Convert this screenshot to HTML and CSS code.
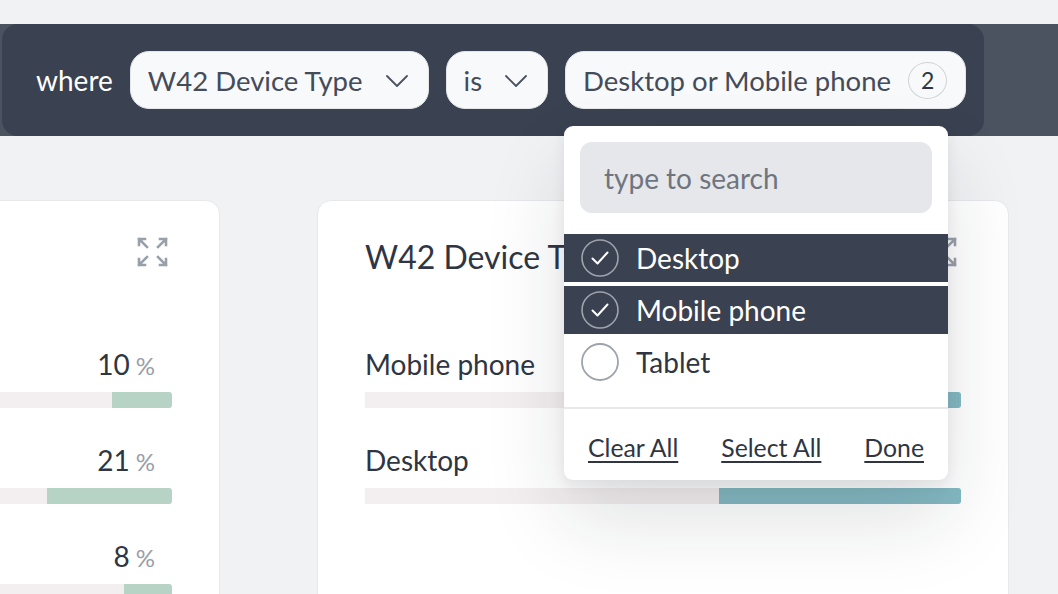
FILE: index.html
```html
<!DOCTYPE html>
<html>
<head>
<meta charset="utf-8">
<link rel="stylesheet" href="styles.css">
</head>
<body>
<div class="page">
  <div class="band">
    <div class="filter-bar">
      <span class="where">where</span>
      <div class="pill">
        <span>W42 Device Type</span>
        <svg class="chev" width="22" height="12" viewBox="0 0 22 12"><polyline points="1,1 11,11 21,1" fill="none" stroke="#4a5160" stroke-width="1.8" stroke-linecap="round" stroke-linejoin="round"/></svg>
      </div>
      <div class="pill">
        <span>is</span>
        <svg class="chev" width="22" height="12" viewBox="0 0 22 12"><polyline points="1,1 11,11 21,1" fill="none" stroke="#4a5160" stroke-width="1.8" stroke-linecap="round" stroke-linejoin="round"/></svg>
      </div>
      <div class="pill pill-value">
        <span>Desktop or Mobile phone</span>
        <span class="count">2</span>
      </div>
    </div>
  </div>

  <div class="cards">
    <div class="card">
      <div class="card-head">
        <span class="title">W42 Browser</span>
        <svg class="expand" width="31" height="30" viewBox="0 0 31 30"><g fill="none" stroke="#9aa0a9" stroke-width="2.6" stroke-linecap="square"><path d="M2 8V2h6M2 2l8 8"/><path d="M23 2h6v6M29 2l-8 8"/><path d="M2 22v6h6M2 28l8-8"/><path d="M29 22v6h-6M29 28l-8-8"/></g></svg>
      </div>
      <div class="rows">
        <div class="row">
          <div class="row-head"><span class="label">Chrome</span><span class="value">10<small>%</small></span></div>
          <div class="bar"><div class="fill green" style="width:10%"></div></div>
        </div>
        <div class="row">
          <div class="row-head"><span class="label">Safari</span><span class="value">21<small>%</small></span></div>
          <div class="bar"><div class="fill green" style="width:21%"></div></div>
        </div>
        <div class="row">
          <div class="row-head"><span class="label">Firefox</span><span class="value">8<small>%</small></span></div>
          <div class="bar"><div class="fill green" style="width:8%"></div></div>
        </div>
      </div>
    </div>

    <div class="card">
      <div class="card-head">
        <span class="title">W42 Device Type</span>
        <svg class="expand" width="31" height="30" viewBox="0 0 31 30"><g fill="none" stroke="#9aa0a9" stroke-width="2.6" stroke-linecap="square"><path d="M2 8V2h6M2 2l8 8"/><path d="M23 2h6v6M29 2l-8 8"/><path d="M2 22v6h6M2 28l8-8"/><path d="M29 22v6h-6M29 28l-8-8"/></g></svg>
      </div>
      <div class="rows">
        <div class="row">
          <div class="row-head"><span class="label">Mobile phone</span><span class="value">59<small>%</small></span></div>
          <div class="bar"><div class="fill teal" style="width:59%"></div></div>
        </div>
        <div class="row">
          <div class="row-head"><span class="label">Desktop</span><span class="value">41<small>%</small></span></div>
          <div class="bar"><div class="fill teal" style="width:40.6%"></div></div>
        </div>
      </div>
    </div>
  </div>

  <div class="dropdown">
    <div class="search">type to search</div>
    <div class="options">
      <div class="option selected">
        <span class="check"><svg width="38" height="38" viewBox="0 0 38 38"><circle cx="19" cy="19" r="18" fill="none" stroke="#9ea3ac" stroke-width="1.6"/><polyline points="11.5,19.5 16.5,24.5 26.5,13.5" fill="none" stroke="#fff" stroke-width="2" stroke-linecap="round" stroke-linejoin="round"/></svg></span>
        <span>Desktop</span>
      </div>
      <div class="option selected">
        <span class="check"><svg width="38" height="38" viewBox="0 0 38 38"><circle cx="19" cy="19" r="18" fill="none" stroke="#9ea3ac" stroke-width="1.6"/><polyline points="11.5,19.5 16.5,24.5 26.5,13.5" fill="none" stroke="#fff" stroke-width="2" stroke-linecap="round" stroke-linejoin="round"/></svg></span>
        <span>Mobile phone</span>
      </div>
      <div class="option">
        <span class="check"><svg width="38" height="38" viewBox="0 0 38 38"><circle cx="19" cy="19" r="18" fill="none" stroke="#9ea3ac" stroke-width="1.8"/></svg></span>
        <span>Tablet</span>
      </div>
    </div>
    <div class="footer">
      <a>Clear All</a>
      <a>Select All</a>
      <a>Done</a>
    </div>
  </div>
</div>
</body>
</html>
```

FILE: styles.css
```css
* { box-sizing: border-box; }
html, body {
  margin: 0;
  padding: 0;
  background: #f1f2f4;
  font-family: Lato, "Noto Sans", sans-serif;
  overflow: hidden;
}
.page {
  position: relative;
  width: 1058px;
  height: 594px;
  overflow: hidden;
  padding-top: 24px;
}
.band {
  height: 112px;
  background: #4b5260;
  display: flex;
}
.filter-bar {
  width: 982px;
  margin-left: 2px;
  height: 112px;
  background: #3a4150;
  border-radius: 16px;
  display: flex;
  align-items: center;
  padding-left: 34px;
  gap: 17px;
}
.where {
  color: #ffffff;
  font-size: 28px;
}
.pill {
  height: 58px;
  background: #f8f9fa;
  border: 1px solid #e3e5e9;
  border-radius: 19px;
  display: flex;
  align-items: center;
  padding: 0 20px 0 17px;
  gap: 23px;
  color: #444b59;
  font-size: 27.5px;
}
.chev { display: block; margin-top: 2px; }
.pill-value { gap: 17px; padding-right: 18px; }
.count {
  width: 39px;
  height: 37px;
  border: 1.5px solid #cfd2d7;
  border-radius: 50%;
  display: flex;
  align-items: center;
  justify-content: center;
  font-size: 23px;
  color: #2f3542;
}

.cards {
  display: flex;
  gap: 97px;
  margin-top: 64px;
  margin-left: -472px;
}
.card {
  width: 692px;
  height: 440px;
  flex: none;
  background: #ffffff;
  border: 1px solid #e7e8eb;
  border-radius: 14px;
  padding: 36px 47px 0;
}
.card-head {
  display: flex;
  justify-content: space-between;
  align-items: flex-start;
  height: 40px;
}
.title {
  font-size: 32px;
  line-height: 40px;
  color: #2f3542;
}
.expand { display: block; margin-right: 4px; }
.rows {
  margin-top: 70px;
  display: flex;
  flex-direction: column;
  gap: 35px;
}
.row-head {
  display: flex;
  justify-content: space-between;
  align-items: baseline;
  height: 34px;
  line-height: 34px;
  font-size: 28px;
  color: #2f3542;
  margin-bottom: 11px;
}
.value { padding-right: 17px; }
.value small {
  font-size: 24px;
  line-height: 20px;
  color: #989ea8;
  margin-left: 6px;
}
.bar {
  height: 16px;
  background: #f3eeef;
  border-radius: 0 3px 3px 0;
  display: flex;
  justify-content: flex-end;
  overflow: hidden;
}
.fill { height: 100%; }
.fill.green { background: #b7d3c5; }
.fill.teal { background: #84b9c3; }

.dropdown {
  position: absolute;
  left: 564px;
  top: 126px;
  width: 384px;
  height: 354px;
  background: #ffffff;
  border-radius: 9px;
  box-shadow: 0 40px 80px rgba(25, 30, 40, 0.13), 0 4px 14px rgba(25, 30, 40, 0.07);
  padding-top: 16px;
}
.search {
  margin: 0 16px;
  height: 71px;
  background: #e5e7ea;
  border-radius: 12px;
  padding-left: 24px;
  display: flex;
  align-items: center;
  font-size: 28px;
  color: #6f7580;
}
.options {
  margin-top: 21px;
  display: flex;
  flex-direction: column;
  gap: 4px;
}
.option {
  height: 48px;
  display: flex;
  align-items: center;
  padding-left: 17px;
  gap: 17px;
  font-size: 28px;
  color: #2f3542;
}
.option.selected {
  background: #3a4150;
  color: #ffffff;
}
.check svg { display: block; }
.footer {
  margin-top: 21px;
  border-top: 2px solid #e7e8eb;
  height: 73px;
  display: flex;
  justify-content: space-between;
  align-items: center;
  padding: 6px 24px 0;
  font-size: 24.8px;
}
.footer a {
  color: #2f3542;
  text-decoration: underline;
  text-underline-offset: 4px;
  text-decoration-thickness: 1.5px;
}
```
